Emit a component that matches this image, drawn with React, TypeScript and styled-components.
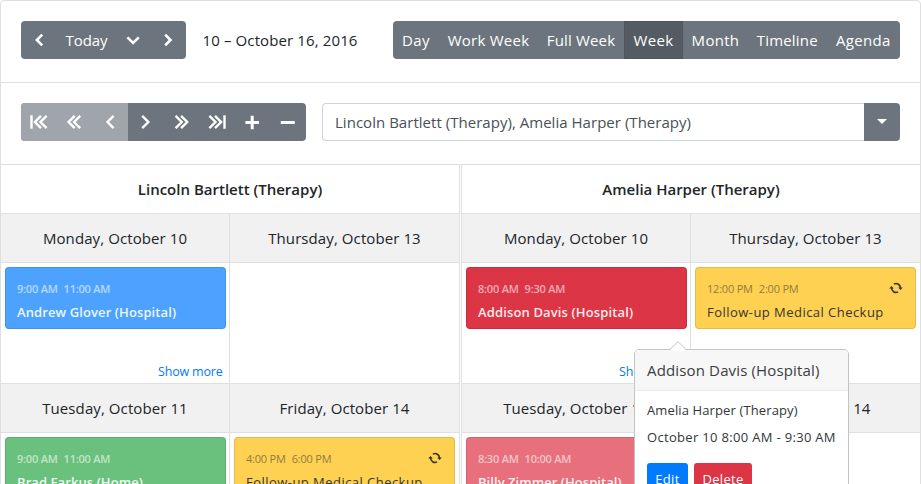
import React from "react";
import styled, { createGlobalStyle, css } from "styled-components";

const line = "#dee0e4";
const slate = "#6c757d";

const GlobalStyle = createGlobalStyle`
  *, *::before, *::after { box-sizing: border-box; }
  html, body { margin: 0; height: 100%; overflow: hidden; background: #fff; }
  body { font-family: "Open Sans", "Noto Sans", sans-serif; font-size: 15px; color: #212529; }
  button { font: inherit; margin: 0; }
`;

const Scheduler = styled.div`
  position: relative;
  width: 921px;
  height: 555px;
  border: 1px solid #dfdfdf;
  border-radius: 4px;
  overflow: hidden;
  white-space: nowrap;
`;

const Toolbar = styled.div`
  display: flex;
  align-items: flex-start;
  height: 82px;
  padding: 20px 20px 0;
  border-bottom: 1px solid #dfdfdf;
`;

const ButtonGroup = styled.div`
  display: flex;
  height: 38px;
  border-radius: 4px;
  overflow: hidden;
  background: ${slate};
  color: #fff;
`;

const GroupButton = styled.button<{ $width: number; $active?: boolean; $disabled?: boolean; $spacing?: number }>`
  display: flex;
  align-items: center;
  justify-content: center;
  flex: none;
  width: ${(p) => p.$width}px;
  height: 38px;
  padding: 0;
  border: 0;
  background: transparent;
  color: #fff;
  letter-spacing: ${(p) => p.$spacing ?? 0}px;
  ${(p) => p.$active && css`background: #545b62; border: 1px solid #4e555b;`}
  ${(p) => p.$disabled && css`background: #a0a5ab;`}
`;

const TodayButton = styled(GroupButton)`
  justify-content: space-between;
  padding: 0 8px 0 8.5px;
`;

const DateRange = styled.div`
  margin-left: 16.5px;
  line-height: 38px;
  letter-spacing: 0.12px;
`;

const ViewGroup = styled(ButtonGroup)`
  margin-left: auto;
`;

const ResourcePicker = styled.div`
  display: flex;
  flex: 1;
  height: 38px;
  margin-left: 16px;
`;

const PickerValue = styled.div`
  flex: 1;
  padding-left: 12px;
  border: 1px solid #ced4da;
  border-right: 0;
  border-radius: 4px 0 0 4px;
  color: #495057;
  line-height: 37px;
  letter-spacing: 0.03px;
`;

const PickerToggle = styled.button`
  display: flex;
  align-items: center;
  justify-content: center;
  width: 36px;
  padding: 0 0 1px;
  border: 0;
  border-radius: 0 4px 4px 0;
  background: ${slate};
`;

const Resources = styled.div`
  display: grid;
  grid-template-columns: 459px 459px;
  column-gap: 1px;
`;

const Resource = styled.section`
  border: 0 solid ${line};
  &:first-child { border-right-width: 1px; }
  &:last-child { border-left-width: 1px; }
`;

const ResourceName = styled.div`
  height: 49px;
  line-height: 49px;
  border-bottom: 1px solid ${line};
  text-align: center;
  font-weight: 600;
`;

const DayGrid = styled.div`
  display: grid;
  grid-template-columns: 229px 229px;
`;

const Day = styled.div`
  border: 0 solid ${line};
  &:nth-child(odd) { border-right-width: 1px; }
`;

const DayName = styled.div`
  height: 49px;
  line-height: 49px;
  background: #f1f1f1;
  border-bottom: 1px solid ${line};
  text-align: center;
  letter-spacing: 0.09px;
`;

const DayBody = styled.div`
  display: flex;
  flex-direction: column;
  justify-content: space-between;
  height: 121px;
  padding: 4px 0 0 4px;
  border-bottom: 1px solid ${line};
`;

const EventCard = styled.div<{ $bg: string; $light?: boolean }>`
  display: grid;
  grid-template-columns: 1fr auto;
  grid-template-rows: 20px 26px;
  align-items: center;
  width: 221px;
  height: 62px;
  padding: 10px 12px 0 11px;
  border: 1px solid rgba(0, 0, 0, 0.1);
  border-radius: 4px;
  background: ${(p) => p.$bg};
  color: ${(p) => (p.$light ? "#212529" : "#fff")};
  font-weight: ${(p) => (p.$light ? 400 : 600)};
`;

const EventTime = styled.div<{ $light?: boolean }>`
  display: flex;
  gap: 6px;
  font-size: 11px;
  letter-spacing: ${(p) => (p.$light ? -0.2 : -0.22)}px;
  opacity: ${(p) => (p.$light ? 0.5 : 0.58)};
`;

const EventTitle = styled.div<{ $spacing: number }>`
  grid-column: 1 / -1;
  padding-top: 2px;
  font-size: 13px;
  letter-spacing: ${(p) => p.$spacing}px;
  opacity: 0.9;
`;

const ShowMore = styled.a`
  align-self: flex-end;
  margin: auto 6.5px 0 0;
  color: #007bff;
  font-size: 12.5px;
  line-height: 23px;
  letter-spacing: -0.2px;
`;

const Popover = styled.div`
  position: absolute;
  left: 633px;
  top: 348px;
  width: 215px;
  height: 170px;
  border: 1px solid #c4c4c4;
  border-radius: 5px;
  background: #fff;
  font-size: 13px;
`;

const PopoverArrow = styled.svg`
  position: absolute;
  left: 34px;
  top: -9px;
`;

const PopoverTitle = styled.div`
  height: 41px;
  padding-left: 12px;
  line-height: 41px;
  border-bottom: 1px solid #ebebeb;
  border-radius: 4px 4px 0 0;
  background: #f7f7f7;
  color: #3a3e42;
  font-size: 15px;
  letter-spacing: 0.15px;
`;

const PopoverBody = styled.div`
  padding: 6px 12px;
  color: #32363a;
`;

const PopoverLine = styled.div<{ $spacing: number }>`
  line-height: 27px;
  letter-spacing: ${(p) => p.$spacing}px;
`;

const PopoverActions = styled.div`
  display: flex;
  gap: 6px;
  margin-top: 12px;
`;

const ActionButton = styled.button<{ $bg: string; $width: number }>`
  width: ${(p) => p.$width}px;
  height: 31px;
  padding: 0;
  border: 0;
  border-radius: 3px;
  background: ${(p) => p.$bg};
  color: #fff;
  letter-spacing: 0.3px;
`;

/* Stroke icons share an 18px box centred on 9,9. */
const Glyph = ({ d, width = 2.2 }: { d: string; width?: number }) => (
  <svg width="18" height="18" viewBox="0 0 18 18" fill="none" stroke="currentColor" strokeWidth={width}>
    <path d={d} />
  </svg>
);

const RecurringIcon = () => (
  <svg width="14" height="12" viewBox="0 0 14 12" fill="none" stroke="#33342c" strokeWidth="1.6">
    <path d="M4.9 2.1A4.4 4.4 0 0 1 11.4 6.2" />
    <path d="M9.1 9.9A4.4 4.4 0 0 1 2.6 5.8" />
    <path d="M9.2 5.6h4.6l-2.3 2.5z M4.8 6.4H.2l2.3-2.5z" fill="#33342c" stroke="none" />
  </svg>
);

const pagerIcons = [
  { d: "M1.5 2.3v13.4 M11 2.9L4.9 9l6.1 6.1 M16.6 2.9L10.5 9l6.1 6.1", disabled: true, width: 2.4 },
  { d: "M9.7 2.9L3.6 9l6.1 6.1 M15.2 2.9L9.1 9l6.1 6.1", disabled: true, width: 2.4 },
  { d: "M12.6 2.9L6.5 9l6.1 6.1", disabled: true, width: 2.4 },
  { d: "M5.2 2.9L11.3 9l-6.1 6.1", width: 2.4 },
  { d: "M3.6 2.9L9.7 9l-6.1 6.1 M9.1 2.9L15.2 9l-6.1 6.1", width: 2.4 },
  { d: "M1.4 2.9L7.5 9l-6.1 6.1 M7 2.9L13.1 9l-6.1 6.1 M16.5 2.3v13.4", width: 2.4 },
  { d: "M8.2 2.7v13.6 M1.4 9.5h13.6", width: 3 },
  { d: "M1.8 9.5h14", width: 3 },
];

const views = [
  { name: "Day", width: 46, spacing: 0.35 },
  { name: "Work Week", width: 99, spacing: 0.25 },
  { name: "Full Week", width: 86, spacing: 0.17 },
  { name: "Week", width: 59, spacing: 0.33 },
  { name: "Month", width: 65, spacing: 0.3 },
  { name: "Timeline", width: 78.5, spacing: 0.18 },
  { name: "Agenda", width: 73.5, spacing: 0.33 },
];

type Item = { bg: string; from: string; to: string; title: string; light?: boolean; spacing: number };
type DayData = { name: string; item?: Item; more?: boolean };

const checkup = (from: string, to: string): Item => ({
  bg: "#ffd152", from, to, title: "Follow-up Medical Checkup", light: true, spacing: 0.46,
});

const resources: { name: string; days: DayData[] }[] = [
  {
    name: "Lincoln Bartlett (Therapy)",
    days: [
      { name: "Monday, October 10", more: true, item: { bg: "#4da2ff", from: "9:00 AM", to: "11:00 AM", title: "Andrew Glover (Hospital)", spacing: 0.1 } },
      { name: "Thursday, October 13" },
      { name: "Tuesday, October 11", item: { bg: "#69c17d", from: "9:00 AM", to: "11:00 AM", title: "Brad Farkus (Home)", spacing: 0.08 } },
      { name: "Friday, October 14", item: checkup("4:00 PM", "6:00 PM") },
    ],
  },
  {
    name: "Amelia Harper (Therapy)",
    days: [
      { name: "Monday, October 10", more: true, item: { bg: "#dc3545", from: "8:00 AM", to: "9:30 AM", title: "Addison Davis (Hospital)", spacing: 0.14 } },
      { name: "Thursday, October 13", item: checkup("12:00 PM", "2:00 PM") },
      { name: "Tuesday, October 11", item: { bg: "#e7707c", from: "8:30 AM", to: "10:00 AM", title: "Billy Zimmer (Hospital)", spacing: 0.05 } },
      { name: "Friday, October 14" },
    ],
  },
];

export default function App() {
  return (
    <>
      <GlobalStyle />
      <Scheduler>
        <Toolbar>
          <ButtonGroup>
            <GroupButton $width={36} aria-label="Previous"><Glyph d="M12.2 3.7L6.9 9l5.3 5.3" width={2.6} /></GroupButton>
            <TodayButton $width={93} $spacing={-0.06}>
              Today
              <Glyph d="M3.4 6.4L9.1 12l5.7-5.6" width={2.6} />
            </TodayButton>
            <GroupButton $width={36} aria-label="Next"><Glyph d="M6.2 3.7L11.5 9l-5.3 5.3" width={2.6} /></GroupButton>
          </ButtonGroup>
          <DateRange>10 – October 16, 2016</DateRange>
          <ViewGroup>
            {views.map((v) => (
              <GroupButton key={v.name} $width={v.width} $spacing={v.spacing} $active={v.name === "Week"}>
                {v.name}
              </GroupButton>
            ))}
          </ViewGroup>
        </Toolbar>
        <Toolbar>
          <ButtonGroup>
            {pagerIcons.map((icon, i) => (
              <GroupButton key={i} $width={35.625} $disabled={icon.disabled}>
                <Glyph d={icon.d} width={icon.width} />
              </GroupButton>
            ))}
          </ButtonGroup>
          <ResourcePicker>
            <PickerValue>Lincoln Bartlett (Therapy), Amelia Harper (Therapy)</PickerValue>
            <PickerToggle aria-label="Select resources">
              <svg width="10" height="5" viewBox="0 0 10 5" fill="#fff"><path d="M0 0h10L5 5z" /></svg>
            </PickerToggle>
          </ResourcePicker>
        </Toolbar>
        <Resources>
          {resources.map((r) => (
            <Resource key={r.name}>
              <ResourceName>{r.name}</ResourceName>
              <DayGrid>
                {r.days.map((d) => (
                  <Day key={d.name}>
                    <DayName>{d.name}</DayName>
                    <DayBody>
                      {d.item && (
                        <EventCard $bg={d.item.bg} $light={d.item.light}>
                          <EventTime $light={d.item.light}><span>{d.item.from}</span><span>{d.item.to}</span></EventTime>
                          {d.item.light && <RecurringIcon />}
                          <EventTitle $spacing={d.item.spacing}>{d.item.title}</EventTitle>
                        </EventCard>
                      )}
                      {d.more && <ShowMore>Show more</ShowMore>}
                    </DayBody>
                  </Day>
                ))}
              </DayGrid>
            </Resource>
          ))}
        </Resources>
        <Popover>
          <PopoverArrow width="18" height="10" viewBox="0 0 18 10">
            <path d="M1 9L9 1l8 8v1H1z" fill="#fff" />
            <path d="M.6 8.8L9 .7l8.4 8.1" fill="none" stroke="#c4c4c4" />
          </PopoverArrow>
          <PopoverTitle>Addison Davis (Hospital)</PopoverTitle>
          <PopoverBody>
            <PopoverLine $spacing={0.12}>Amelia Harper (Therapy)</PopoverLine>
            <PopoverLine $spacing={0.32}>October 10 8:00 AM - 9:30 AM</PopoverLine>
            <PopoverActions>
              <ActionButton $bg="#007bff" $width={41}>Edit</ActionButton>
              <ActionButton $bg="#dc3545" $width={58}>Delete</ActionButton>
            </PopoverActions>
          </PopoverBody>
        </Popover>
      </Scheduler>
    </>
  );
}
